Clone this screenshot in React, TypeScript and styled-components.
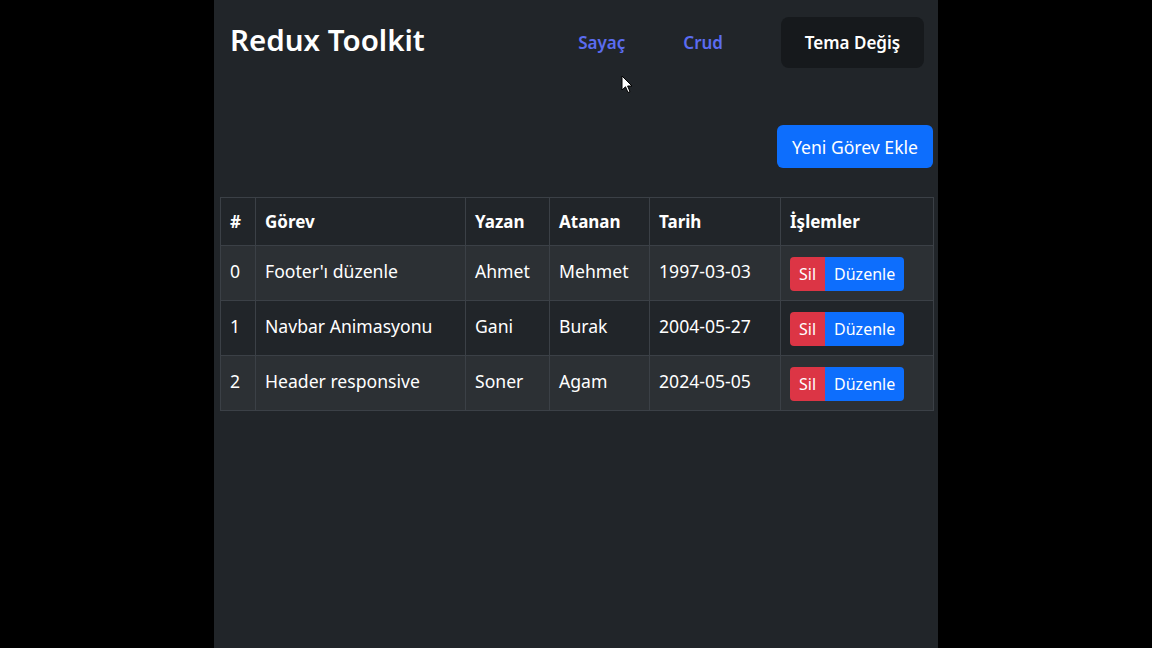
import React from 'react';
import styled, { createGlobalStyle } from 'styled-components';

const GlobalStyle = createGlobalStyle`
  html, body {
    margin: 0;
    padding: 0;
    background: #000;
  }
  body {
    font-family: 'Noto Sans', 'Open Sans', sans-serif;
    color: #dee2e6;
  }
`;

type Task = {
  id: number;
  title: string;
  author: string;
  assignee: string;
  date: string;
};

const tasks: Task[] = [
  { id: 0, title: "Footer'ı düzenle", author: 'Ahmet', assignee: 'Mehmet', date: '1997-03-03' },
  { id: 1, title: 'Navbar Animasyonu', author: 'Gani', assignee: 'Burak', date: '2004-05-27' },
  { id: 2, title: 'Header responsive', author: 'Soner', assignee: 'Agam', date: '2024-05-05' },
];

const columns = [
  { label: '#', width: 35 },
  { label: 'Görev', width: 210 },
  { label: 'Yazan', width: 84 },
  { label: 'Atanan', width: 100 },
  { label: 'Tarih', width: 131 },
  { label: 'İşlemler', width: 153 },
];

export default function App() {
  return (
    <>
      <GlobalStyle />
      <Page>
        <Header>
          <Brand>Redux Toolkit</Brand>
          <Nav>
            <NavLink href='#'>Sayaç</NavLink>
            <NavLink href='#'>Crud</NavLink>
          </Nav>
          <ThemeButton>Tema Değiş</ThemeButton>
          <Cursor width='12' height='19' viewBox='0 0 12 19'>
            <path d='M1 1 L1 15 L4.5 11.8 L7 17.5 L9 16.6 L6.6 11 L11 11 Z' fill='#fff' stroke='#000' strokeWidth='1' />
          </Cursor>
        </Header>

        <Actions>
          <PrimaryButton>Yeni Görev Ekle</PrimaryButton>
        </Actions>

        <Table>
          <colgroup>
            {columns.map((c) => (
              <col key={c.label} style={{ width: c.width }} />
            ))}
          </colgroup>
          <thead>
            <tr>
              {columns.map((c) => (
                <Th key={c.label}>{c.label}</Th>
              ))}
            </tr>
          </thead>
          <tbody>
            {tasks.map((t, i) => (
              <Row key={t.id} $striped={i % 2 === 0}>
                <Td>{t.id}</Td>
                <Td>{t.title}</Td>
                <Td>{t.author}</Td>
                <Td>{t.assignee}</Td>
                <Td>{t.date}</Td>
                <Td>
                  <BtnGroup>
                    <SmallButton $variant='danger'>Sil</SmallButton>
                    <SmallButton $variant='primary'>Düzenle</SmallButton>
                  </BtnGroup>
                </Td>
              </Row>
            ))}
          </tbody>
        </Table>
      </Page>
    </>
  );
}

const Page = styled.div`
  width: 724px;
  min-height: 100vh;
  margin: 0 auto;
  background: #212529;
  box-sizing: border-box;
  padding: 0 5px 0 6px;
`;

const Header = styled.header`
  position: relative;
  display: flex;
  align-items: center;
  padding: 17px 9px 0 10px;
  height: 51px;
`;

const Brand = styled.h1`
  margin: 0 0 6px;
  font-size: 29.5px;
  font-weight: 600;
  color: #fff;
`;

const Nav = styled.nav`
  display: flex;
  gap: 58px;
  margin-left: auto;
  margin-right: 58px;
`;

const NavLink = styled.a`
  color: #5b6cf0;
  font-size: 17px;
  font-weight: 600;
  text-decoration: none;
`;

const ThemeButton = styled.button`
  height: 51px;
  width: 143px;
  border: none;
  border-radius: 8px;
  background: #16191c;
  color: #fff;
  font-family: inherit;
  font-size: 17px;
  font-weight: 600;
`;

const Cursor = styled.svg`
  position: absolute;
  left: 401px;
  top: 75px;
`;

const Actions = styled.div`
  display: flex;
  justify-content: flex-end;
  margin-top: 57px;
`;

const PrimaryButton = styled.button`
  height: 43px;
  padding: 0 15px;
  border: none;
  border-radius: 6px;
  background: #0d6efd;
  color: #fff;
  font-family: inherit;
  font-size: 17.6px;
`;

const Table = styled.table`
  margin-top: 29px;
  width: 713px;
  table-layout: fixed;
  border-collapse: collapse;
  color: #fff;
  font-size: 17.6px;
`;

const Th = styled.th`
  height: 47px;
  padding: 0 9px;
  text-align: left;
  font-weight: 700;
  font-size: 17px;
  background: #212529;
  border: 1px solid #3b4046;
`;

const Row = styled.tr<{ $striped: boolean }>`
  background: ${(p) => (p.$striped ? '#2c3034' : '#212529')};
`;

const Td = styled.td`
  height: 50px;
  padding: 0 9px 4px;
  border: 1px solid #3b4046;
  vertical-align: middle;
  white-space: nowrap;
`;

const BtnGroup = styled.div`
  display: inline-flex;
  margin-top: 5px;
`;

const SmallButton = styled.button<{ $variant: 'danger' | 'primary' }>`
  height: 34px;
  padding: 0 ${(p) => (p.$variant === 'danger' ? '9px' : '9px')};
  border: none;
  color: #fff;
  font-family: inherit;
  font-size: 16px;
  background: ${(p) => (p.$variant === 'danger' ? '#dc3545' : '#0d6efd')};
  border-radius: ${(p) => (p.$variant === 'danger' ? '4px 0 0 4px' : '0 4px 4px 0')};
`;
